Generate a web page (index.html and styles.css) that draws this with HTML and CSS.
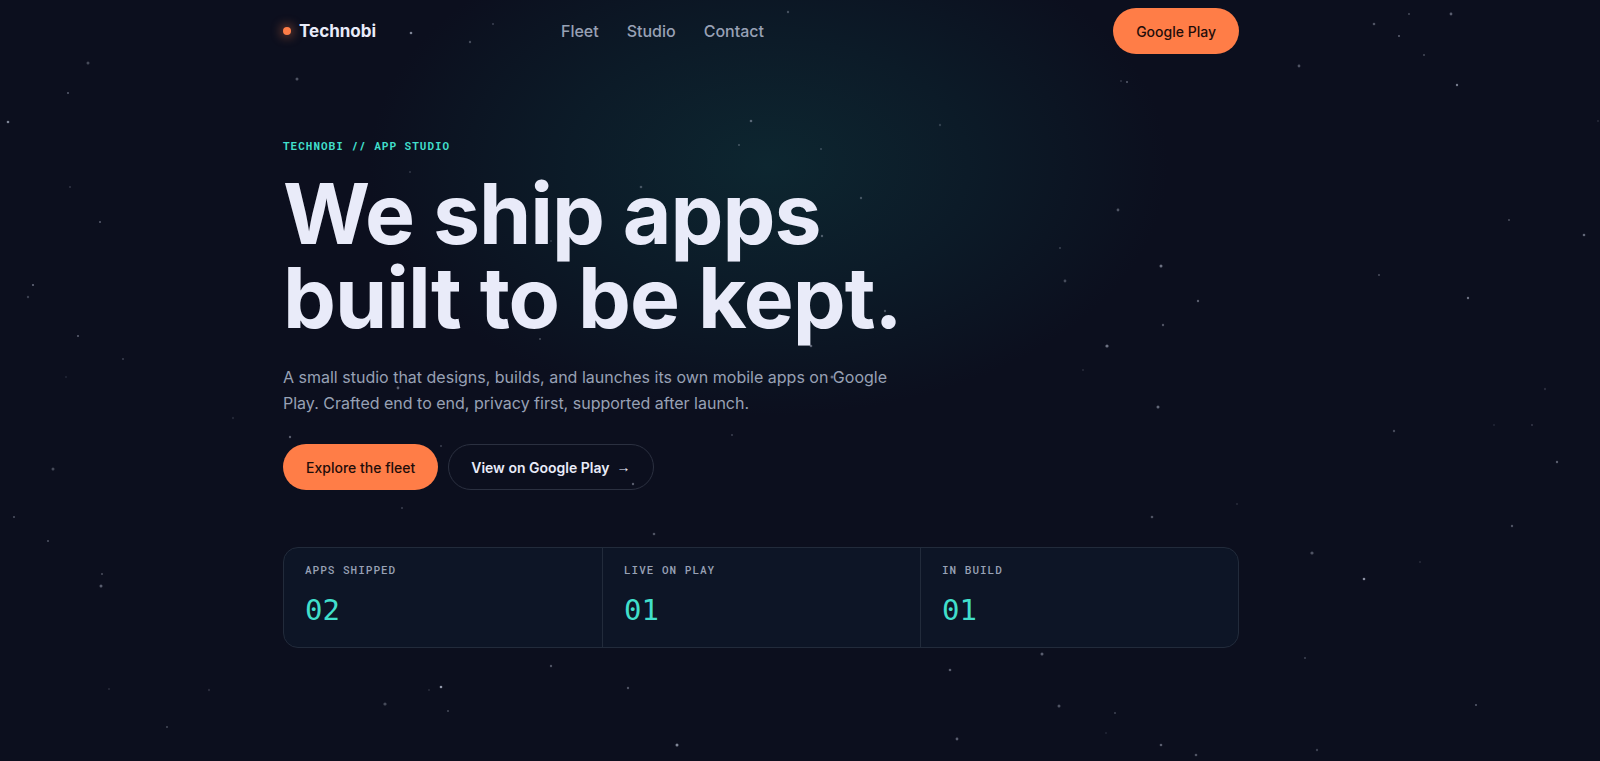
FILE: index.html
```html
<!DOCTYPE html>
<html lang="en">

<head>
  <meta charset="UTF-8" />
  <meta name="viewport" content="width=device-width, initial-scale=1.0" />
  <title>Technobi - App Studio</title>
  <link rel="stylesheet" href="styles.css">
</head>

<body>
  <div class="page">
    <header class="nav">
      <a class="brand" href="#top"><span class="brand-dot"></span>Technobi</a>
      <nav class="nav-links" aria-label="Main">
        <a href="#fleet">Fleet</a>
        <a href="#studio">Studio</a>
        <a href="#contact">Contact</a>
      </nav>
      <a class="btn btn-primary" href="#play">Google Play</a>
    </header>

    <main class="hero" id="top">
      <p class="eyebrow">TECHNOBI // APP STUDIO</p>
      <h1>We ship apps<br>built to be kept.</h1>
      <p class="lead">A small studio that designs, builds, and launches its own mobile apps on Google Play. Crafted end to end, privacy first, supported after launch.</p>
      <div class="actions">
        <a class="btn btn-primary" href="#fleet">Explore the fleet</a>
        <a class="btn btn-ghost" href="#play">View on Google Play <span class="arrow">→</span></a>
      </div>

      <dl class="stats">
        <div class="stat">
          <dt>APPS SHIPPED</dt>
          <dd>02</dd>
        </div>
        <div class="stat">
          <dt>LIVE ON PLAY</dt>
          <dd>01</dd>
        </div>
        <div class="stat">
          <dt>IN BUILD</dt>
          <dd>01</dd>
        </div>
      </dl>
    </main>
  </div>

  <svg class="stars" id="stars" aria-hidden="true"></svg>

  <script src="stars.js"></script>
</body>

</html>
```
FILE: styles.css
```css
:root {
  --bg: #0c0f1e;
  --panel: #0d1526;
  --line: #222b3b;
  --text: #e9ebf9;
  --muted: #98a1b5;
  --orange: #ff7d47;
  --teal: #41dfcb;
  --sans: Inter, "Liberation Sans", sans-serif;
  --mono: "Roboto Mono", "DejaVu Sans Mono", monospace;
}

* {
  box-sizing: border-box;
}

body {
  margin: 0;
  min-height: 100vh;
  background: radial-gradient(ellipse 400px 250px at 48% 165px, #0d2630 0%, #0c1b28 50%, var(--bg) 100%) var(--bg);
  color: var(--text);
  font-family: var(--sans);
  font-size: 16px;
}

a {
  color: inherit;
  text-decoration: none;
}

.stars {
  position: absolute;
  inset: 0;
  width: 100%;
  height: 100%;
  fill: #cdd3e6;
  pointer-events: none;
}

.page {
  max-width: 1034px;
  margin: 0 auto;
  padding: 8px 78px 0 0;
}

/* nav */
.nav {
  display: grid;
  grid-template-columns: 278px 1fr auto;
  align-items: center;
}

.brand {
  display: flex;
  align-items: center;
  gap: 8px;
  font-size: 17px;
  font-weight: 700;
}

.brand-dot {
  width: 8px;
  height: 8px;
  border-radius: 50%;
  background: var(--orange);
  box-shadow: 0 0 12px var(--orange);
}

.nav-links {
  display: flex;
  gap: 28px;
  color: var(--muted);
  font-weight: 500;
}

.btn {
  display: inline-flex;
  align-items: center;
  gap: 7px;
  height: 46px;
  padding: 0 22px;
  border: 1px solid transparent;
  border-radius: 23px;
  font-size: 14px;
  font-weight: 500;
}

.btn-primary {
  background: var(--orange) border-box;
  color: #1f0d0a;
}

.btn-ghost {
  border-color: #2b3040;
  font-weight: 600;
}

.arrow {
  font-family: "Liberation Sans", sans-serif;
}

/* hero */
.hero {
  padding-top: 84px;
}

.eyebrow {
  margin: 0 0 18px;
  color: var(--teal);
  font-family: var(--mono);
  font-size: 11px;
  font-weight: 700;
  line-height: 16px;
  letter-spacing: 1px;
}

h1 {
  margin: 0 0 24px;
  font-size: 84px;
  font-weight: 700;
  line-height: 84px;
  letter-spacing: -1px;
}

.lead {
  max-width: 620px;
  margin: 0 0 28px;
  color: var(--muted);
  font-size: 16px;
  line-height: 26px;
}

.actions {
  display: flex;
  gap: 10px;
  margin-bottom: 57px;
}

/* stats */
.stats {
  display: grid;
  grid-template-columns: repeat(3, 1fr);
  margin: 0;
  border: 1px solid var(--line);
  border-radius: 15px;
  background: var(--panel);
}

.stat {
  padding: 14px 21px 19px;
}

.stat + .stat {
  border-left: 1px solid var(--line);
}

.stat dt {
  color: var(--muted);
  font-family: var(--mono);
  font-size: 11px;
  font-weight: 500;
  line-height: 16px;
  letter-spacing: 1px;
}

.stat dd {
  margin: 14px 0 0;
  color: var(--teal);
  font-family: "DejaVu Sans Mono", monospace;
  font-size: 29px;
  line-height: 36px;
}
```
FILE: stars.js
```js
// x, y, radius, opacity
const stars = [
  // left side
  [88, 63, 1.5, 0.3], [68, 93, 1, 0.4], [8, 122, 1.3, 0.6], [70, 187, 1, 0.2],
  [100, 222, 1, 0.4], [33, 285, 1.1, 0.45], [28, 297, 1.2, 0.25], [78, 336, 1.1, 0.4],
  [123, 359, 1, 0.25], [66, 377, 1, 0.12], [233, 418, 1.2, 0.12], [53, 469, 1.5, 0.3],
  [14, 517, 1, 0.35], [48, 541, 1, 0.35], [102, 574, 1.1, 0.3], [101, 586, 1.5, 0.4],
  [109, 689, 1, 0.15], [209, 690, 1.2, 0.15], [167, 727, 1, 0.3],

  // behind the hero
  [411, 33, 1.3, 0.6], [470, 42, 1.2, 0.3], [493, 24, 1, 0.25], [297, 79, 1.5, 0.35],
  [788, 12, 1.2, 0.3], [751, 121, 1.3, 0.4], [739, 145, 1, 0.3], [821, 149, 1, 0.25],
  [940, 125, 1.2, 0.2], [410, 172, 1, 0.2], [641, 187, 1.3, 0.3],
  [861, 198, 1.2, 0.3], [822, 236, 1.2, 0.35], [551, 241, 1, 0.2], [885, 311, 1.2, 0.3],
  [540, 339, 1, 0.3], [811, 346, 1.3, 0.4], [832, 377, 1.5, 0.5], [398, 388, 1.4, 0.4],
  [290, 437, 1.2, 0.4], [441, 446, 1, 0.25], [732, 435, 1, 0.25], [633, 484, 1.2, 0.4],
  [402, 508, 1, 0.25], [654, 534, 1.3, 0.35],

  // below the stats
  [551, 666, 1.2, 0.35], [441, 687, 1.3, 0.7], [429, 690, 1, 0.15], [385, 704, 1.6, 0.3],
  [448, 711, 1, 0.3], [628, 688, 1.2, 0.35], [677, 745, 1.5, 0.6], [1042, 654, 1.5, 0.4],
  [950, 670, 1.3, 0.4], [1059, 706, 1.5, 0.35], [1115, 713, 1.1, 0.25], [1106, 733, 1, 0.12],
  [957, 739, 1.4, 0.4], [1161, 745, 1.3, 0.4], [1196, 755, 1.3, 0.35],

  // right side
  [1121, 81, 1, 0.2], [1127, 82, 1, 0.4], [1118, 210, 1.4, 0.35], [1060, 248, 1, 0.25],
  [1065, 281, 1.4, 0.3], [1161, 266, 1.5, 0.5], [1198, 301, 1.2, 0.4], [1163, 325, 1.2, 0.35],
  [1107, 346, 1.6, 0.5], [1083, 370, 1, 0.15], [1158, 407, 1.5, 0.45], [1237, 504, 1, 0.15],
  [1152, 517, 1.3, 0.35], [1299, 66, 1.4, 0.35], [1374, 24, 1.3, 0.35], [1409, 14, 1, 0.3],
  [1451, 14, 1.4, 0.4], [1399, 36, 1.1, 0.4], [1424, 55, 1, 0.3], [1457, 85, 1.2, 0.55],
  [1598, 121, 1, 0.15], [1509, 220, 1.1, 0.3], [1584, 235, 1.3, 0.45], [1379, 275, 1.1, 0.3],
  [1468, 298, 1.2, 0.5], [1545, 389, 1.2, 0.15], [1494, 425, 1, 0.12], [1532, 425, 1.1, 0.2],
  [1394, 431, 1.2, 0.3], [1557, 462, 1.2, 0.4], [1512, 526, 1.2, 0.35], [1312, 553, 1.6, 0.35],
  [1420, 562, 1, 0.15], [1364, 579, 1.3, 0.65], [1305, 658, 1.1, 0.25], [1476, 705, 1, 0.4],
  [1317, 750, 1.2, 0.25]
];

document.getElementById('stars').innerHTML = stars
  .map(([x, y, r, o]) => `<circle cx="${x}" cy="${y}" r="${r}" opacity="${o}" />`)
  .join('');
```
